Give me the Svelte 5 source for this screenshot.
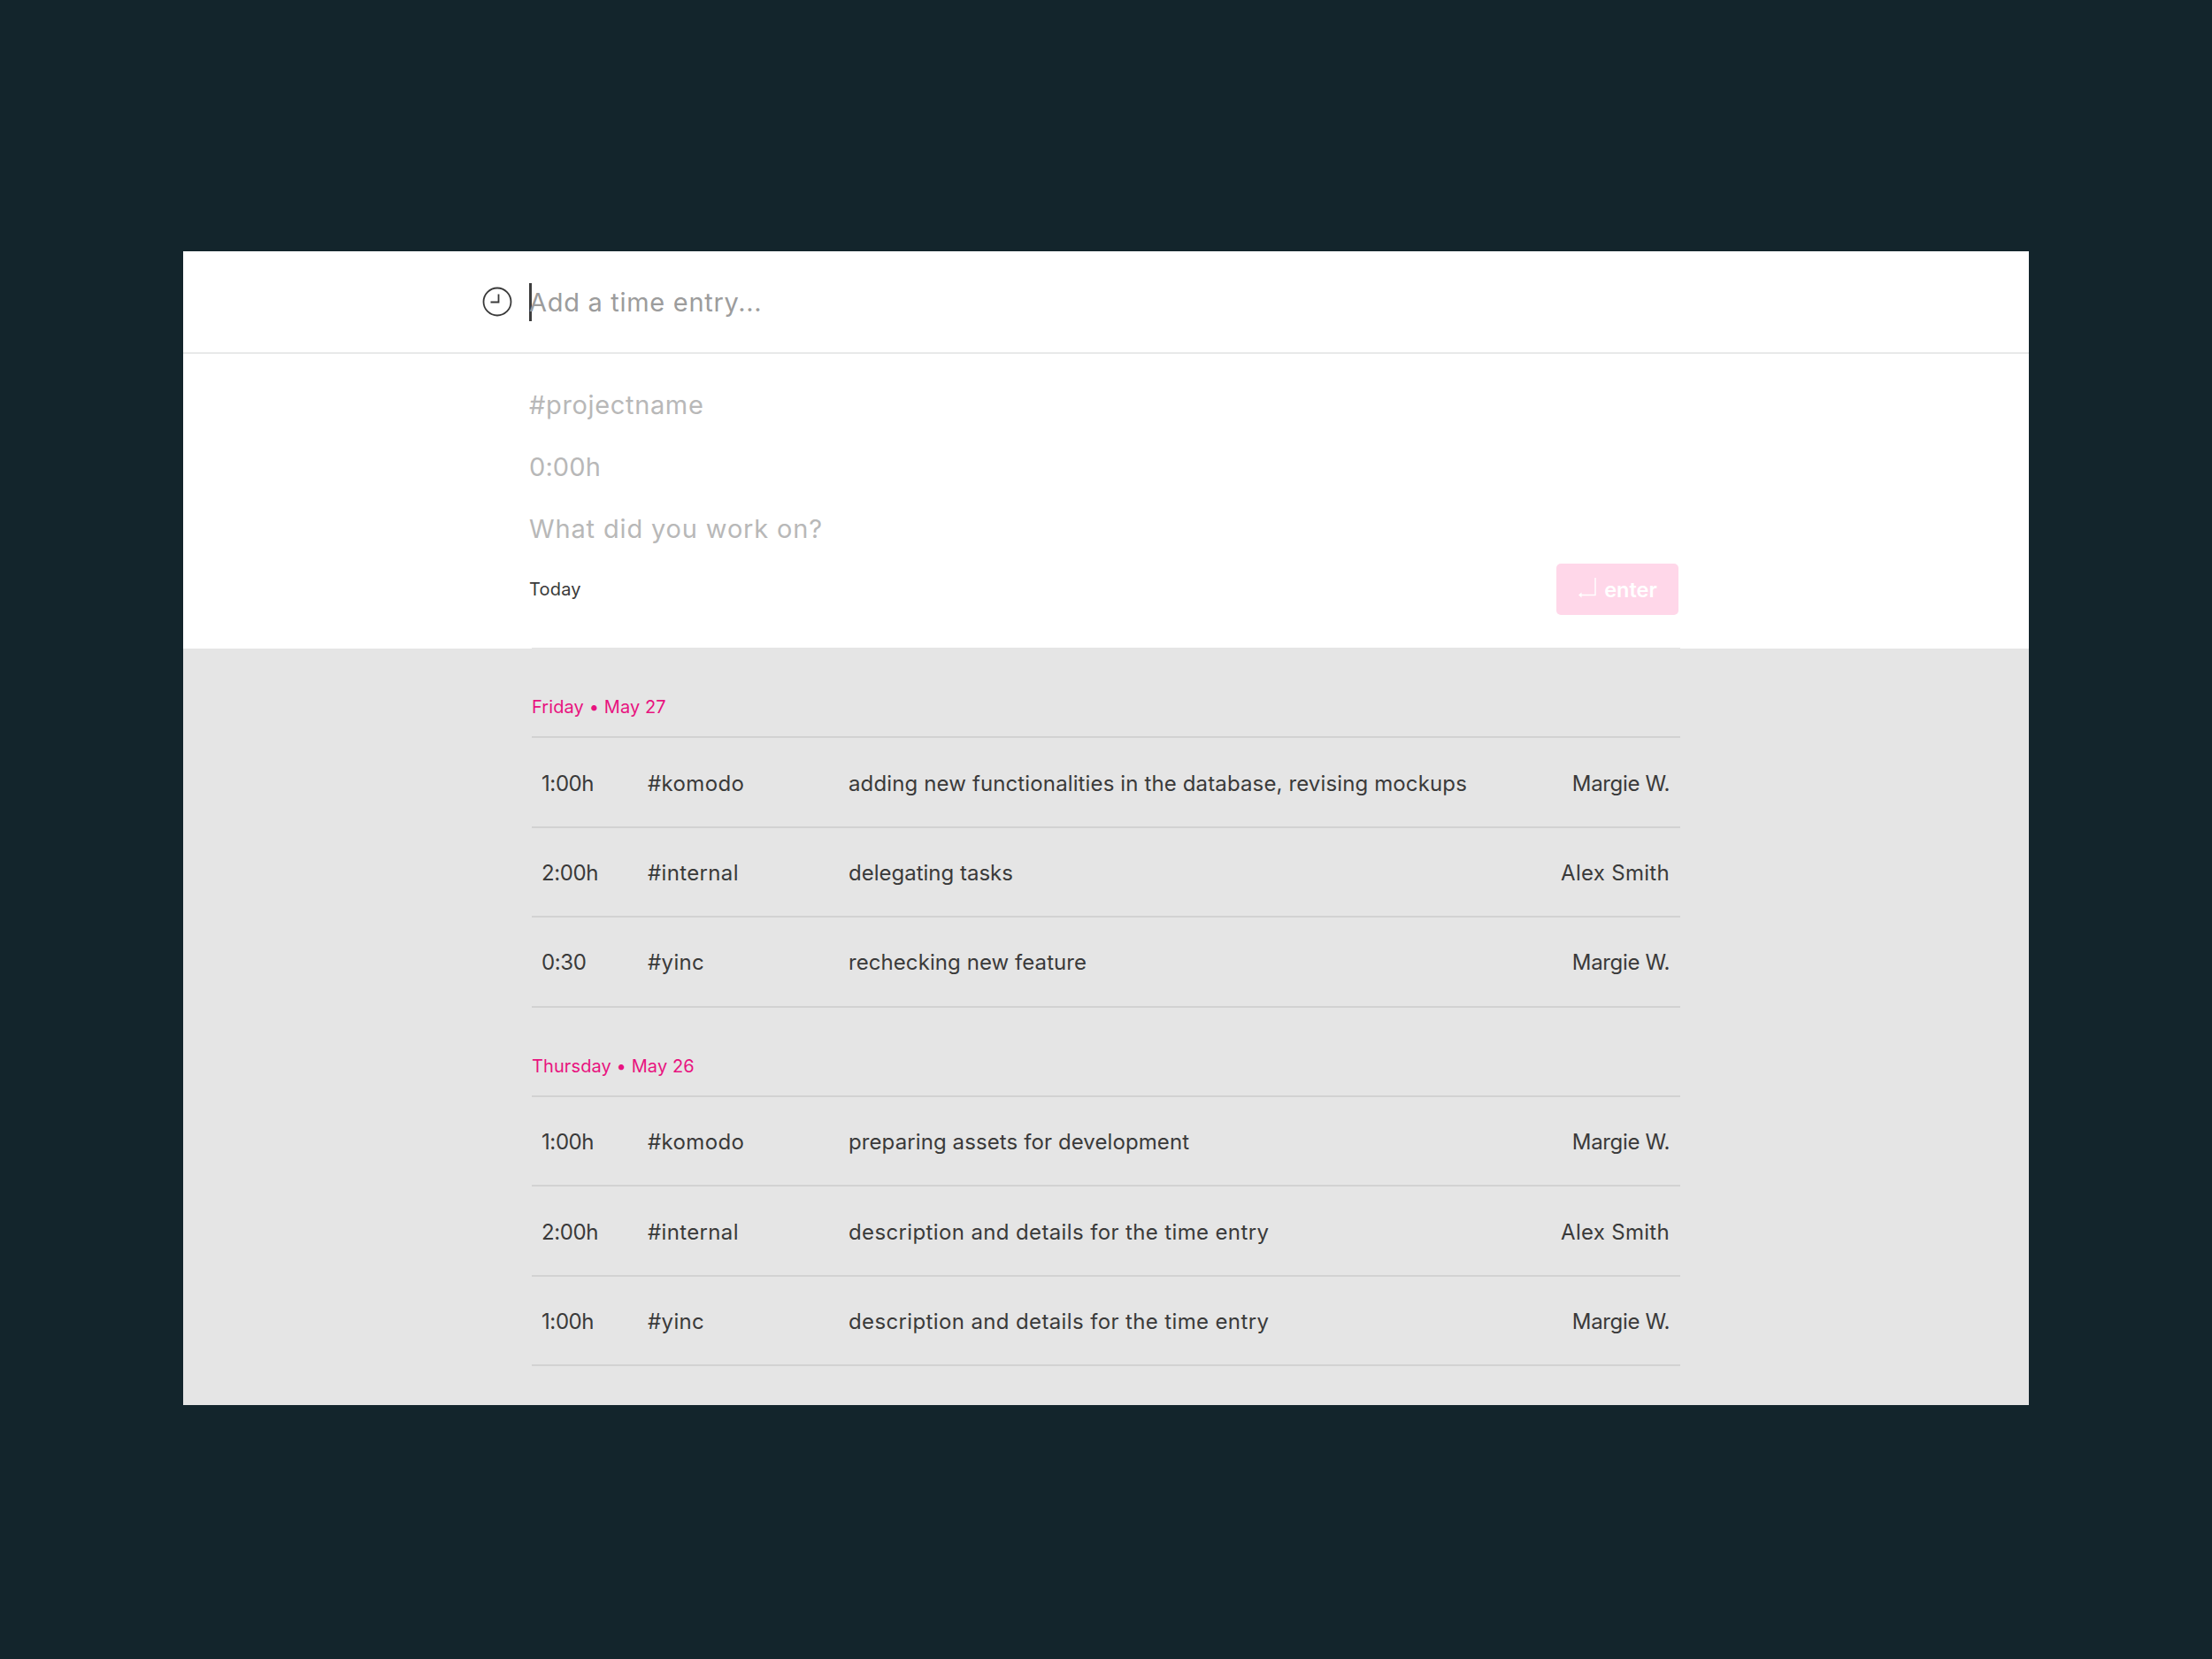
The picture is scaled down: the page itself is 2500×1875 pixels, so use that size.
<script>
  const days = [
    { title: 'Friday • May 27', rows: [
      { time: '1:00h', project: '#komodo', desc: 'adding new functionalities in the database, revising mockups', track: 0.13, who: 'Margie W.', whoTrack: -0.35 },
      { time: '2:00h', project: '#internal', desc: 'delegating tasks', track: 0, who: 'Alex Smith', whoTrack: 0.3 },
      { time: '0:30', project: '#yinc', desc: 'rechecking new feature', track: 0.07, who: 'Margie W.', whoTrack: -0.35 }
    ]},
    { title: 'Thursday • May 26', rows: [
      { time: '1:00h', project: '#komodo', desc: 'preparing assets for development', track: 0.1, who: 'Margie W.', whoTrack: -0.35 },
      { time: '2:00h', project: '#internal', desc: 'description and details for the time entry', track: 0.37, who: 'Alex Smith', whoTrack: 0.3 },
      { time: '1:00h', project: '#yinc', desc: 'description and details for the time entry', track: 0.37, who: 'Margie W.', whoTrack: -0.35 }
    ]}
  ];
</script>

<div class="page">
  <main class="card">
    <header class="entry">
      <svg class="clock" width="34" height="34" viewBox="0 0 34 34" fill="none" stroke="#3a3a3a" stroke-width="1.8">
        <circle cx="17" cy="17" r="15.5" />
        <path d="M18.5 8.5V17.5H9.5" />
      </svg>
      <span class="caret"></span>
      <span class="placeholder">Add a time entry...</span>
    </header>
    <section class="form">
      <div class="field">#projectname</div>
      <div class="field short">0:00h</div>
      <div class="field wide">What did you work on?</div>
      <div class="actions">
        <span class="today">Today</span>
        <button class="enter">
          <svg width="21" height="26" viewBox="0 0 21 26" fill="none" stroke="#fff" stroke-width="1.4">
            <path d="M20 0V19.5H3" />
            <path d="M4.5 16.5L1 19.5L4.5 22.5Z" fill="#fff" stroke="none" />
          </svg>
          enter
        </button>
      </div>
    </section>
    <section class="log">
      {#each days as day}
        <div class="day">
          <h2>{day.title}</h2>
          {#each day.rows as row}
            <div class="row">
              <span class="time">{row.time}</span>
              <span class="project">{row.project}</span>
              <span style:letter-spacing="{row.track}px">{row.desc}</span>
              <span style:letter-spacing="{row.whoTrack}px">{row.who}</span>
            </div>
          {/each}
        </div>
      {/each}
    </section>
  </main>
</div>

<style>
  :global(body) { margin: 0; }
  .page {
    background: #13252c;
    height: 1875px;
    padding: 284px 207px 0;
    box-sizing: border-box;
    font-family: "Inter", "Open Sans", sans-serif;
  }
  .card { background: #fff; height: 1304px; display: flex; flex-direction: column; }
  .entry {
    height: 114px;
    box-sizing: content-box;
    border-bottom: 2px solid #e8e9e9;
    display: flex;
    align-items: center;
    padding-left: 338px;
  }
  .clock { margin-right: 19px; margin-top: -1px; }
  .caret { width: 3px; height: 43px; background: #3d3d3d; margin-right: -3px; margin-top: 1px; }
  .placeholder { font-size: 29px; color: #9c9c9c; letter-spacing: 0.7px; margin-top: 1px; }
  .form { height: 333px; box-sizing: border-box; padding: 23px 396px 0 391px; display: flex; flex-direction: column; }
  .field { font-size: 29px; line-height: 70px; color: #b8b8b8; letter-spacing: 0.65px; }
  .short { letter-spacing: 0.1px; }
  .wide { letter-spacing: 0.85px; }
  .actions { display: flex; justify-content: space-between; align-items: center; margin-top: 4px; }
  .today { font-size: 20px; color: #3a3a3a; letter-spacing: 0.2px; }
  .enter {
    width: 138px;
    height: 58px;
    border: 0;
    border-radius: 5px;
    background: #ffd7e9;
    color: #fff;
    font: 600 23.5px "Inter", sans-serif;
    display: flex;
    align-items: center;
    justify-content: center;
    gap: 9px;
    padding: 0;
  }
  .log { flex: 1; background: #e5e5e5; padding: 0 394px; position: relative; }
  .log::before {
    content: "";
    position: absolute;
    left: 394px;
    right: 394px;
    top: -1px;
    height: 1px;
    background: #e5e5e5;
  }
  .day h2 {
    margin: 0;
    height: 101.4px;
    box-sizing: border-box;
    padding-top: 53px;
    font-size: 20px;
    line-height: 26px;
    font-weight: 400;
    letter-spacing: 0.1px;
    color: #e8137f;
    border-bottom: 2px solid #d2d2d2;
  }
  .row {
    height: 101.4px;
    box-sizing: border-box;
    border-bottom: 2px solid #d2d2d2;
    display: grid;
    grid-template-columns: 120px 226px 1fr auto;
    align-items: center;
    padding: 2px 12px 0;
    font-size: 24px;
    color: #3a3a3a;
  }
  .time { margin-left: -1px; letter-spacing: -0.4px; }
  .project { margin-left: -1px; letter-spacing: 0.35px; }
</style>
